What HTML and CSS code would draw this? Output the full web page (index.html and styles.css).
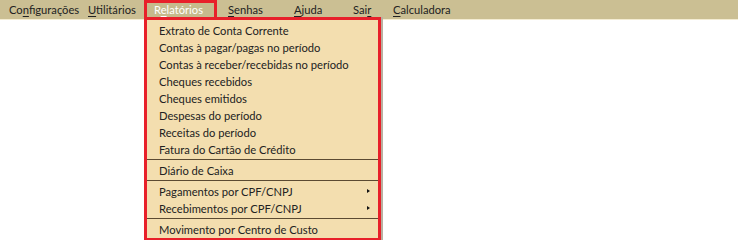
FILE: index.html
```html
<!DOCTYPE html>
<html lang="pt">
<head>
<meta charset="utf-8">
<title>Menu</title>
<link rel="stylesheet" href="styles.css">
</head>
<body>
<nav class="menubar">
  <span class="top w-conf">Co<u>n</u>figurações</span>
  <span class="top w-util"><u>U</u>tilitários</span>
  <span class="top w-rel active">R<u>e</u>latórios</span>
  <span class="top w-sen"><u>S</u>enhas</span>
  <span class="top w-aju"><u>A</u>juda</span>
  <span class="top w-sai">Sai<u>r</u></span>
  <span class="top"><u>C</u>alculadora</span>
</nav>
<div class="dropdown">
  <div class="item">Extrato de Conta Corrente</div>
  <div class="item">Contas à pagar/pagas no período</div>
  <div class="item">Contas à receber/recebidas no período</div>
  <div class="item">Cheques recebidos</div>
  <div class="item">Cheques emitidos</div>
  <div class="item">Despesas do período</div>
  <div class="item">Receitas do período</div>
  <div class="item">Fatura do Cartão de Crédito</div>
  <div class="sep"></div>
  <div class="item">Diário de Caixa</div>
  <div class="sep"></div>
  <div class="item sub">Pagamentos por CPF/CNPJ</div>
  <div class="item sub">Recebimentos por CPF/CNPJ</div>
  <div class="sep"></div>
  <div class="item">Movimento por Centro de Custo</div>
</div>
</body>
</html>
```
FILE: styles.css
```css
html, body {
  margin: 0;
  padding: 0;
  background: #ffffff;
}
body {
  position: relative;
  width: 738px;
  height: 240px;
  overflow: hidden;
  font-family: Lato, "Open Sans", sans-serif;
  font-size: 11.2px;
  color: #222222;
}
.menubar {
  display: flex;
  align-items: center;
  height: 19px;
  padding-left: 9px;
  background: #cbbf93;
  border-bottom: 1px solid #f4ecd2;
}
.top {
  display: block;
  flex: none;
  line-height: 19px;
  white-space: nowrap;
}
.top u {
  text-decoration-thickness: 1px;
  text-underline-offset: 2px;
}
.w-conf { width: 79px; }
.w-util { width: 56px; }
.w-rel  { width: 74px; }
.w-sen  { width: 66px; }
.w-aju  { width: 59px; }
.w-sai  { width: 40px; }
.active {
  position: relative;
  z-index: 1;
  color: #ffffff;
  margin-left: 10px;
}
.active::before {
  content: "";
  position: absolute;
  left: -10px;
  top: 0;
  width: 73px;
  height: 20px;
  box-sizing: border-box;
  border: 3px solid #e8202a;
  background: #c6ba8c;
  z-index: -1;
}
.dropdown {
  position: absolute;
  left: 144px;
  top: 17px;
  width: 237px;
  box-sizing: border-box;
  border: 3px solid #e8202a;
  background: #f3deaf;
  padding: 2px 0 0;
  box-shadow: 2px 0 0 #b9b0a0;
}
.item {
  position: relative;
  height: 17px;
  line-height: 17px;
  padding-left: 12px;
  white-space: nowrap;
}
.sub::after {
  content: "";
  position: absolute;
  right: 8px;
  top: 6px;
  border-left: 3px solid #111;
  border-top: 2.5px solid transparent;
  border-bottom: 2.5px solid transparent;
}
.sep {
  height: 3px;
  box-sizing: border-box;
  border-top: 1px solid #5b4a32;
  margin-top: 1px;
}
```
